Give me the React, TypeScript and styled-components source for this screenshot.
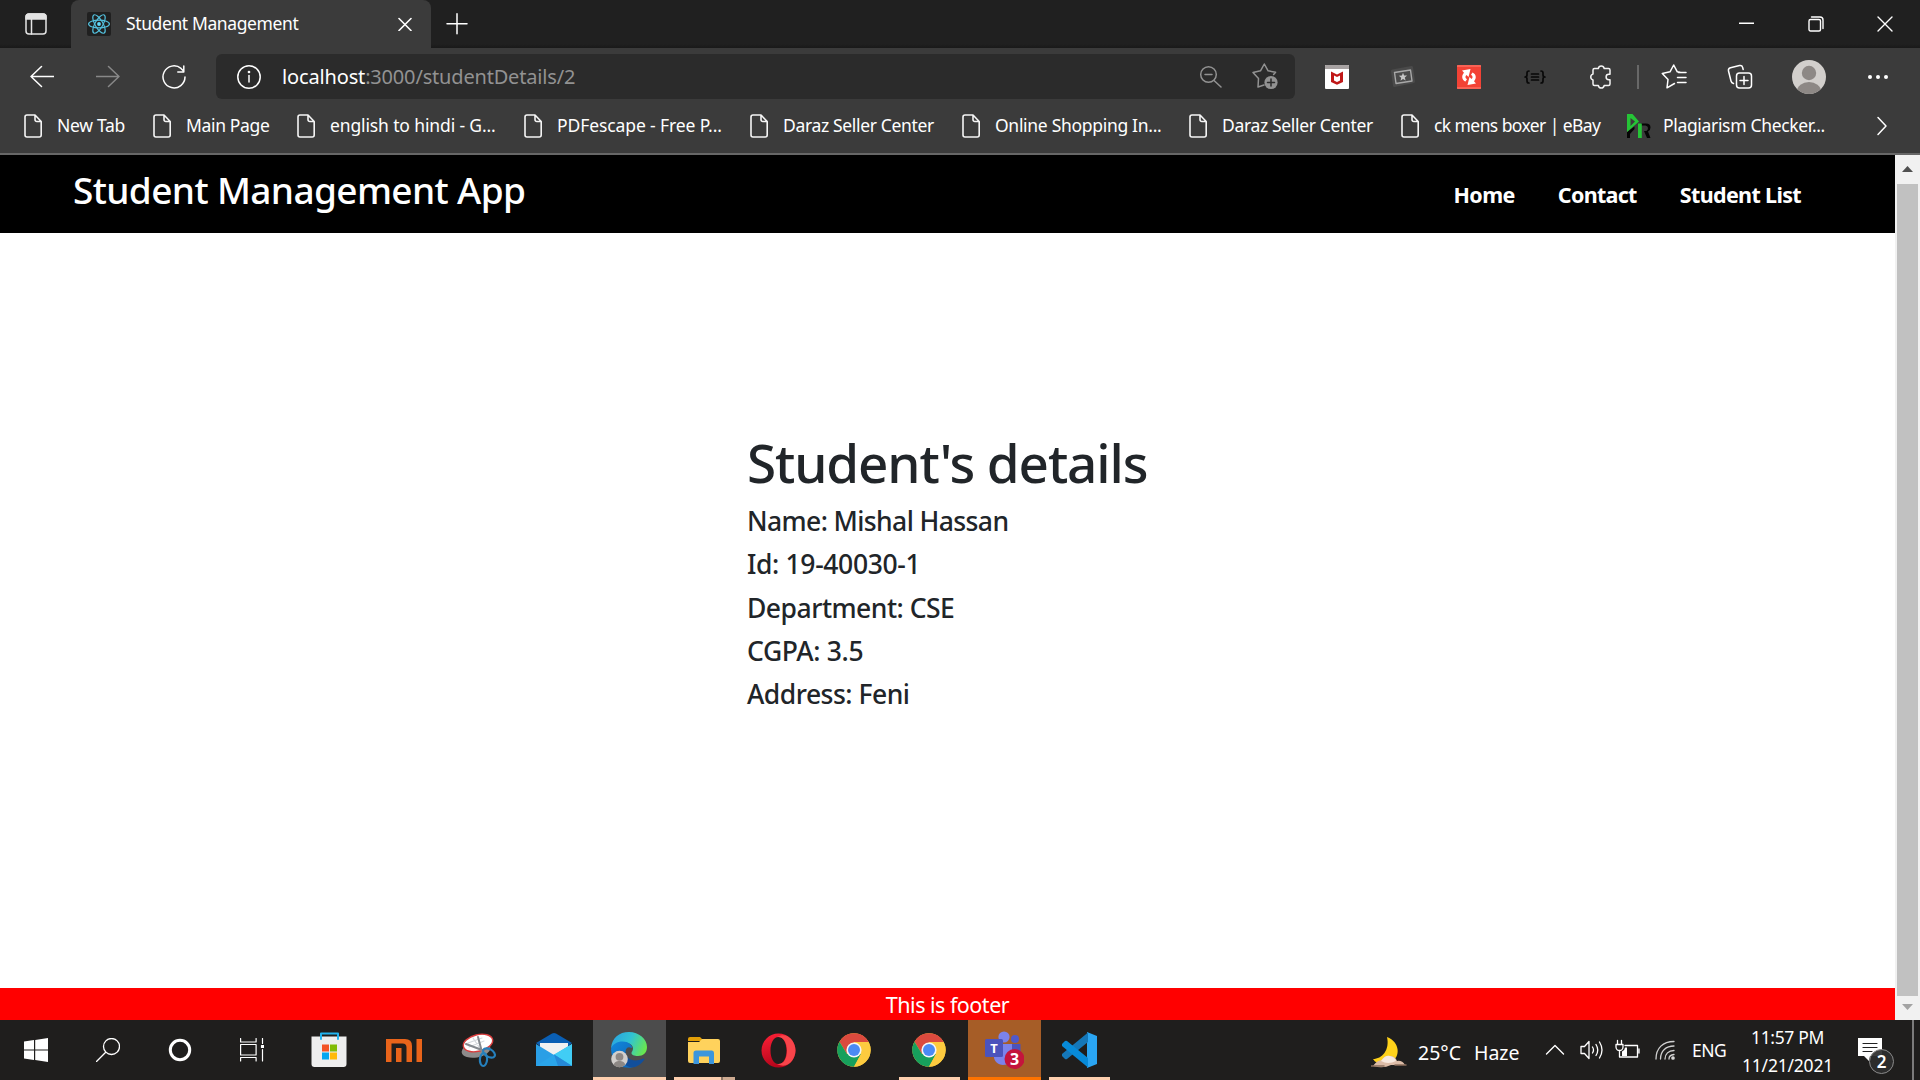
import React from "react";
import styled, { createGlobalStyle } from "styled-components";

const GlobalStyle = createGlobalStyle`
  * { box-sizing: border-box; }
  html, body { margin: 0; padding: 0; overflow: hidden; }
  body { font-family: "Noto Sans", "Open Sans", sans-serif; background: #fff; }
  svg { display: block; flex: none; }
`;

const Screen = styled.div`
  width: 1920px;
  height: 1080px;
  display: flex;
  flex-direction: column;
  overflow: hidden;
`;

/* Text whose tracking is tuned per label */
const Label = styled.span<{ $track?: number }>`
  white-space: nowrap;
  letter-spacing: ${(p) => p.$track ?? 0}px;
`;

/* ---------- Tab strip ---------- */
const TabStrip = styled.div`
  height: 48px;
  display: flex;
  background: linear-gradient(#202020 0 44px, #191919 48px);
`;
const TabActions = styled.div`
  width: 71px;
  display: flex;
  align-items: center;
  justify-content: center;
  padding-left: 1px;
`;
const Tab = styled.div`
  width: 360px;
  display: flex;
  align-items: center;
  padding: 0 19px 0 16px;
  background: #3b3b3b;
  border-radius: 8px 8px 0 0;
  color: #fff;
  font-size: 17.5px;
  line-height: 46px;
`;
const TabTitle = styled(Label)`
  flex: 1;
  height: 48px;
  margin-left: 15px;
`;
const NewTab = styled.div`
  width: 52px;
  display: flex;
  align-items: center;
  justify-content: center;
  padding-bottom: 1px;
`;
const WindowButtons = styled.div`
  margin-left: auto;
  padding-right: 1px;
  display: flex;
`;
const WindowButton = styled.div`
  width: 69px;
  display: flex;
  align-items: center;
  justify-content: center;
  padding-bottom: 1px;
`;

/* ---------- Toolbar ---------- */
const Toolbar = styled.div`
  height: 54px;
  display: flex;
  align-items: center;
  padding: 3px 0 0 9px;
  background: #3b3b3b;
`;
const ToolButton = styled.div<{ $w?: number }>`
  width: ${(p) => p.$w ?? 66}px;
  height: 45px;
  flex: none;
  display: flex;
  align-items: center;
  justify-content: center;
`;
const AddressBar = styled.div`
  width: 1079px;
  height: 45px;
  margin: 0 9px;
  padding: 0 17px 0 20px;
  display: flex;
  align-items: center;
  border-radius: 6px;
  background: #2b2b2b;
  font-size: 20px;
`;
const Url = styled.div`
  flex: 1;
  display: flex;
  margin-left: 20px;
  line-height: 45px;
`;
const UrlHost = styled(Label)`
  color: #fff;
`;
const UrlPath = styled(Label)`
  color: #929292;
`;
const AddressIcons = styled.div`
  display: flex;
  align-items: center;
  gap: 29px;
`;
const Divider = styled.div`
  width: 2px;
  height: 24px;
  margin: 0 2px 0 3px;
  background: #686868;
`;

/* ---------- Bookmarks ---------- */
const BookmarkBar = styled.div`
  height: 53px;
  display: flex;
  padding-left: 21px;
  border-bottom: 2px solid #676767;
  background: #3b3b3b;
`;
const Bookmark = styled.div<{ $w: number }>`
  width: ${(p) => p.$w}px;
  height: 48px;
  flex: none;
  display: flex;
  align-items: center;
  gap: 12px;
  color: #fff;
  font-size: 17.5px;
  line-height: 46px;
`;
const BookmarkText = styled(Label)`
  height: 48px;
`;
const BookmarkOverflow = styled.div`
  margin-left: auto;
  height: 48px;
  padding-right: 32px;
  display: flex;
  align-items: center;
`;

/* ---------- Web page ---------- */
const Viewport = styled.div`
  height: 865px;
  display: flex;
`;
const Page = styled.div`
  width: 1895px;
  display: flex;
  flex-direction: column;
  background: #fff;
`;
const Navbar = styled.header`
  height: 78px;
  display: flex;
  justify-content: space-between;
  padding: 0 94px 0 73px;
  background: #000;
  color: #fff;
`;
const Brand = styled(Label)`
  font-size: 37px;
  font-weight: 540;
  line-height: 70px;
`;
const NavLinks = styled.nav`
  display: flex;
  gap: 43px;
  font-size: 21.5px;
  font-weight: 700;
  line-height: 79px;
`;
const Main = styled.main`
  flex: 1;
  display: flex;
  flex-direction: column;
  padding: 194px 0 0 747px;
  color: #212529;
`;
const Heading = styled.h1`
  margin: 0 0 1px;
  font-size: 53px;
  font-weight: 500;
  line-height: 72px;
  letter-spacing: -1.12px;
`;
const Detail = styled.p<{ $track: number }>`
  margin: 0;
  font-size: 26.5px;
  font-weight: 500;
  line-height: 43.25px;
  letter-spacing: ${(p) => p.$track}px;
`;
const Footer = styled.footer`
  height: 32px;
  background: #f00;
  color: #fff;
  text-align: center;
  font-size: 21.5px;
  line-height: 33px;
`;
const ScrollBar = styled.div`
  width: 25px;
  display: flex;
  flex-direction: column;
  align-items: center;
  background: #f1f1f1;
`;
const ScrollArrow = styled.div<{ $h: number }>`
  height: ${(p) => p.$h}px;
  padding-bottom: 2px;
  display: flex;
  align-items: center;
`;
const Thumb = styled.div`
  width: 21px;
  height: 812px;
  background: #c1c1c1;
`;

/* ---------- Taskbar ---------- */
const Taskbar = styled.div`
  height: 60px;
  display: flex;
  background: #1f1e1d;
  color: #fff;
`;
const SystemButton = styled.div`
  width: 72px;
  display: flex;
  align-items: center;
  justify-content: center;
`;
const Apps = styled.div`
  display: flex;
  gap: 2px;
  margin-left: 5px;
`;
const AppTile = styled.div<{ $bg?: string }>`
  width: 73px;
  display: flex;
  flex-direction: column;
  align-items: center;
  background: ${(p) => p.$bg ?? "transparent"};
`;
const AppIcon = styled.div`
  height: 57px;
  padding: 3px 2px 0 0;
  display: flex;
  align-items: center;
`;
const Underline = styled.div<{ $bg: string; $w: number }>`
  width: ${(p) => p.$w}px;
  height: 3px;
  background: ${(p) => p.$bg};
`;
const Tray = styled.div`
  margin-left: auto;
  display: flex;
  align-items: center;
`;
const Weather = styled.div`
  width: 174px;
  display: flex;
  align-items: center;
  gap: 11px;
  font-size: 19.5px;
  line-height: 26px;
  padding-top: 5px;
`;
const WeatherText = styled.div`
  display: flex;
  gap: 13px;
`;
const TrayIcon = styled.div<{ $w: number }>`
  width: ${(p) => p.$w}px;
  display: flex;
  align-items: center;
`;
const Language = styled.div`
  width: 50px;
  font-size: 17.5px;
`;
const Clock = styled.div`
  width: 91px;
  display: flex;
  flex-direction: column;
  align-items: center;
  padding-top: 1px;
  font-size: 17.5px;
  line-height: 28px;
`;
const Notifications = styled.div`
  position: relative;
  width: 41px;
  height: 60px;
  margin-left: 25px;
  padding-top: 18px;
`;
const Badge = styled.div`
  position: absolute;
  left: 11px;
  top: 29px;
  width: 25px;
  height: 25px;
  border: 1px solid #8a8a8a;
  border-radius: 50%;
  background: rgba(45, 45, 45, 0.93);
  text-align: center;
  font-size: 17px;
  font-weight: 600;
  line-height: 23px;
`;
const ShowDesktop = styled.div`
  width: 8px;
  height: 60px;
  margin-left: 13px;
  border-left: 2px solid #7b7b7b;
`;

/* ---------- Icons ---------- */
type IconProps = { w: number; h?: number; sw?: number; color?: string; vb?: string; children: React.ReactNode };
const Icon = ({ w, h = w, sw = 1.5, color = "#fff", vb, children }: IconProps) => (
  <svg width={w} height={h} viewBox={vb ?? `0 0 ${w} ${h}`} fill="none" stroke={color} strokeWidth={sw} strokeLinecap="round" strokeLinejoin="round">
    {children}
  </svg>
);

const PageIcon = () => (
  <Icon w={24} color="#f5f5f5" sw={1.6}>
    <path d="M6 1h8l6.2 6.5V21a2 2 0 0 1-2 2H6a2 2 0 0 1-2-2V3a2 2 0 0 1 2-2zM14 1v4.7a1.8 1.8 0 0 0 1.8 1.8h4.4" />
  </Icon>
);

const PlagiarismIcon = () => (
  <Icon w={24} color="none">
    <path d="M0 18L7.500 12.500V15L3 20v4H0z" fill="#050505" />
    <path d="M14 9.500h5q4.500 0 4.500 4 0 3-2.500 4l2.500 6.500h-3.500l-3-7h2.500q1.500-1 1.500-3t-2.500-2.500H14z" fill="#050505" />
    <path d="M0 0h5.500l6.500 7.500L0 18zM3.500 4v8L8 7.500z" fill="#25c436" fillRule="evenodd" />
    <path d="M11 9.500h3.800V24H11z" fill="#25c436" />
  </Icon>
);

const ReactLogo = () => (
  <Icon w={24} color="#53c1de" sw={1.2}>
    <rect width="24" height="24" rx="2" fill="#202020" stroke="none" />
    <circle cx="12" cy="12" r="1.9" fill="#61dafb" stroke="none" />
    <ellipse cx="12" cy="12" rx="10.4" ry="3.9" />
    <ellipse cx="12" cy="12" rx="10.4" ry="3.9" transform="rotate(60 12 12)" />
    <ellipse cx="12" cy="12" rx="10.4" ry="3.9" transform="rotate(120 12 12)" />
  </Icon>
);

const ChromeIcon = () => (
  <Icon w={34} color="none" vb="-17 -17 34 34">
    <circle r="16.7" fill="#fdc93a" />
    <path d="M-14.5-8.35A16.7 16.7 0 0 1 14.5-8.35L14.6-8H0L-7 4z" fill="#db4a3e" />
    <path d="M-14.5-8.35A16.7 16.7 0 0 0 0 16.7L7 4-7 4z" fill="#17a05c" />
    <path d="M0 16.7A16.7 16.7 0 0 0 14.6-8H0L7 4z" fill="#fdcb3f" />
    <circle r="7.6" fill="#f4f6f8" />
    <circle r="6" fill="#4a8af4" />
  </Icon>
);

const EdgeIcon = () => (
  <svg width="36" height="36" viewBox="0 0 36 36">
    <defs>
      <linearGradient id="edgeTop" x1="0" y1="0.3" x2="1" y2="0.6">
        <stop offset="0" stopColor="#2aa4e0" /><stop offset="0.5" stopColor="#31c3d2" /><stop offset="1" stopColor="#6ae84c" />
      </linearGradient>
      <linearGradient id="edgeMid" x1="0" y1="0" x2="1" y2="1">
        <stop offset="0" stopColor="#1287dc" /><stop offset="1" stopColor="#0d62b3" />
      </linearGradient>
    </defs>
    <path d="M0 16C1 6 8 0 18 0s18 7 18 15c0 6-4 9-9 9-4 0-6.500-1-6.500-3 0-1.500 1.500-2 1.500-4.500C22 11 13 7 0 16z" fill="url(#edgeTop)" />
    <path d="M0 17C2 9 15 7 20 13c1.500 2 1 3 .5 3-3-2-6 0-6 4 0 8 6 12 11 14-9 4-19 1-23-7Q0 22 0 17z" fill="url(#edgeMid)" />
    <path d="M14.500 20c0 7 8 11 18 6.500q1.500 0 .5 1.500c-5 7-12 9-17 6-4-3-6-11-1.500-14z" fill="#124f9b" />
    <circle cx="8.500" cy="27" r="8.300" fill="#d2cfcc" />
    <circle cx="8.500" cy="24.800" r="3.900" fill="#8d8885" />
    <path d="M2.700 33c.5-5.500 11-5.500 11.600 0a8.300 8.300 0 0 1-11.600 0z" fill="#8d8885" />
  </svg>
);

const MailIcon = () => (
  <Icon w={36} color="none">
    <path d="M0 11L16 1.500q2-1 4 0L36 11 18 25z" fill="#0a5fb4" />
    <path d="M4 11h28v8L18 25 4 19z" fill="#f1f1f1" />
    <path d="M0 12l18 11L36 12v22H0z" fill="#2a9fe6" />
    <path d="M36 12L18 22.500 36 34z" fill="#41cdf5" />
    <path d="M0 34L18 22.500 36 34z" fill="#2aa5ea" />
    <path d="M18 22.500L36 34H22z" fill="#2589d8" />
  </Icon>
);

const SnipIcon = () => (
  <Icon w={36} color="none">
    <ellipse cx="15" cy="18" rx="14.500" ry="7.500" fill="#8d8b8b" transform="rotate(-10 15 18)" />
    <ellipse cx="17" cy="11" rx="15" ry="8.300" fill="#fff" stroke="#d93d3d" strokeWidth="1.4" transform="rotate(-14 17 11)" />
    <path d="M7 11l14-5M8 15l15-6M12 6l8 12" stroke="#d4d8dc" strokeWidth="1.200" />
    <path d="M5 12l16 6M17 5l4 15" stroke="#84898e" strokeWidth="2" />
    <ellipse cx="28" cy="21" rx="6.500" ry="3.900" stroke="#2580bd" strokeWidth="2.200" transform="rotate(30 28 21)" />
    <ellipse cx="22.500" cy="27.500" rx="3.600" ry="6.500" stroke="#2580bd" strokeWidth="2.200" transform="rotate(4 22.500 27.500)" />
  </Icon>
);

const TeamsIcon = () => (
  <Icon w={40} color="none">
    <circle cx="20" cy="7" r="5.600" fill="#7b83eb" />
    <circle cx="31" cy="9" r="4" fill="#5059c9" />
    <path d="M24 14h12.500v10a6 6 0 0 1-12.500 2z" fill="#4b53bc" />
    <path d="M10 14h18v13c0 5-4 8-9 8s-9-4-9-8z" fill="#7b83eb" />
    <rect x="1" y="9" width="18" height="18" rx="1.500" fill="#4b53bc" />
    <circle cx="30.500" cy="29" r="10" fill="#c4143c" />
    <text x="10" y="23" fill="#fff" fontSize="13" fontWeight="700" textAnchor="middle">T</text>
    <text x="30.500" y="34.800" fill="#fff" fontSize="16" fontWeight="700" textAnchor="middle">3</text>
  </Icon>
);

const VsCodeIcon = () => (
  <Icon w={36} color="none">
    <path d="M26 0l10 4v28l-10 4z" fill="#2aa5f2" />
    <path d="M1 24l3 3q1 .7 2 0L27 10V.5L1 22z" fill="#1577b8" />
    <path d="M1 12l3-3q1-.7 2 0l21 17v9.500L1 14z" fill="#078ad8" />
  </Icon>
);

const bookmarks: { text: string; w: number; track: number; own?: boolean }[] = [
  { text: "New Tab", w: 129, track: -0.29 },
  { text: "Main Page", w: 144, track: -0.35 },
  { text: "english to hindi - G...", w: 227, track: -0.13 },
  { text: "PDFescape - Free P...", w: 226, track: -0.1 },
  { text: "Daraz Seller Center", w: 212, track: -0.34 },
  { text: "Online Shopping In...", w: 227, track: -0.3 },
  { text: "Daraz Seller Center", w: 212, track: -0.34 },
  { text: "ck mens boxer | eBay", w: 229, track: -0.58 },
  { text: "Plagiarism Checker...", w: 210, track: -0.33, own: true },
];

const details: [string, number][] = [
  ["Name: Mishal Hassan", -0.6],
  ["Id: 19-40030-1", -0.35],
  ["Department: CSE", -0.5],
  ["CGPA: 3.5", -0.35],
  ["Address: Feni", -0.5],
];

const PEACH = "#fdcfae";
const apps: { icon: React.ReactNode; bg?: string; line?: string; lineW?: number }[] = [
  {
    icon: (
      <Icon w={36} color="none">
        <path d="M.5 4.500h35V32a3 3 0 0 1-3 3h-29a3 3 0 0 1-3-3z" fill="#eeeeee" />
        <path d="M10 7V1.500h17V7" stroke="#22b3ee" strokeWidth="2" />
        <path d="M11 12.500h7v7h-7z" fill="#f35325" /><path d="M19 12.500h7v7h-7z" fill="#81bc06" />
        <path d="M11 20.500h7v7h-7z" fill="#05a6f0" /><path d="M19 20.500h7v7h-7z" fill="#ffba08" />
      </Icon>
    ),
  },
  {
    icon: (
      <Icon w={36} h={23} color="none">
        <path d="M0 0h19q7 0 7 7v16h-5.500V8.500q0-4-4-4H5.500V23H0zM10 9h5.500v14H10zM30.500 0H36v23h-5.500z" fill="#e9641a" />
      </Icon>
    ),
  },
  { icon: <SnipIcon /> },
  { icon: <MailIcon /> },
  { icon: <EdgeIcon />, bg: "#4c4c4c", line: PEACH, lineW: 73 },
  {
    icon: (
      <Icon w={32} color="none">
        <path d="M0 5q0-2 2-2h10l4 4H0z" fill="#e3a008" />
        <path d="M0 8h11l3-3h16q2 0 2 2v20q0 2-2 2H2q-2 0-2-2z" fill="#ffd25c" />
        <path d="M5.500 30V19q0-2.500 2.500-2.500h16q2 0 2 2.500v11h-5v-7.500H11V30z" fill="#3c96dc" />
      </Icon>
    ),
    line: `linear-gradient(90deg, ${PEACH} 0 47px, #8c7565 47px 49px, #cdaa91 49px)`,
    lineW: 61,
  },
  {
    icon: (
      <svg width="35" height="35" viewBox="0 0 35 35">
        <defs><linearGradient id="opera" x1="0" y1="0" x2="0.3" y2="1"><stop offset="0" stopColor="#ff2137" /><stop offset="1" stopColor="#b5051b" /></linearGradient></defs>
        <path d="M17.500.5a17 17 0 1 0 0 34 17 17 0 0 0 0-34zM17.500 4c5 0 8 6 8 13.500S22.500 31 17.500 31 9.500 25 9.500 17.500 12.500 4 17.500 4z" fill="url(#opera)" fillRule="evenodd" />
        <path d="M16 4c11-6 18.500 5 18.500 13.500S27 37 16 31c6 1 10-5 10-13.500S22 3 16 4z" fill="#f8444a" />
      </svg>
    ),
  },
  { icon: <ChromeIcon /> },
  { icon: <ChromeIcon />, line: PEACH, lineW: 61 },
  { icon: <TeamsIcon />, bg: "#a65d27", line: "#ff7300", lineW: 73 },
  { icon: <VsCodeIcon />, line: PEACH, lineW: 61 },
];

const PUZZLE =
  "M6.500 4.500H10.300a3 3 0 0 1 5.900 0H20.500a1.500 1.500 0 0 1 1.500 1.500v4.300h-1.200a2.700 2.700 0 0 0 0 5.400H22V20a1.500 1.500 0 0 1-1.500 1.500h-4.300a3 3 0 0 1-5.900 0H6.500A1.500 1.500 0 0 1 5 20v-4.100a3 3 0 0 1 0-5.800V6a1.500 1.500 0 0 1 1.500-1.500z";

export default function App() {
  return (
    <Screen>
      <GlobalStyle />
      <TabStrip>
        <TabActions>
          <Icon w={22} color="#e4e4e4" sw={1.5}>
            <rect x="1" y="1" width="20" height="20" rx="3" />
            <path d="M1 6V4a3 3 0 0 1 3-3h14a3 3 0 0 1 3 3v2z" fill="#e4e4e4" />
            <path d="M6.500 6v15" />
          </Icon>
        </TabActions>
        <Tab>
          <ReactLogo />
          <TabTitle $track={-0.39}>Student Management</TabTitle>
          <Icon w={14} sw={1.6}><path d="M1 1.500l12 12M13 1.500l-12 12" /></Icon>
        </Tab>
        <NewTab><Icon w={22} sw={1.5}><path d="M11 0.800v20M1 10.800h20" /></Icon></NewTab>
        <WindowButtons>
          <WindowButton><Icon w={15} sw={1.5}><path d="M0 7.200h15" /></Icon></WindowButton>
          <WindowButton>
            <Icon w={16} sw={1.4}>
              <rect x="1" y="3.500" width="11.500" height="11.500" rx="1.500" />
              <path d="M3.500 1h8.500a3 3 0 0 1 3 3v8.500" />
            </Icon>
          </WindowButton>
          <WindowButton><Icon w={16} sw={1.4}><path d="M1 1l14 14M15 1L1 15" /></Icon></WindowButton>
        </WindowButtons>
      </TabStrip>

      <Toolbar>
        <ToolButton><Icon w={24}><path d="M24 11.500H1M11.500 1.500L1 11.500l10.500 10" /></Icon></ToolButton>
        <ToolButton><Icon w={24} color="#888"><path d="M0 11.500h23M12.500 1.500L23 11.500l-10.500 10" /></Icon></ToolButton>
        <ToolButton><Icon w={24}><path d="M23 12a11 11 0 1 1-4-8.600L21.500 6M21.800 1v6h-6" /></Icon></ToolButton>
        <AddressBar>
          <Icon w={26}><circle cx="13" cy="13" r="11.200" /><path d="M13 11.500v6.500" /><circle cx="13" cy="8" r=".6" fill="#fff" /></Icon>
          <Url>
            <UrlHost $track={-0.15}>localhost</UrlHost>
            <UrlPath $track={-0.18}>:3000/studentDetails/2</UrlPath>
          </Url>
          <AddressIcons>
            <Icon w={24} color="#929292"><circle cx="10.500" cy="9.500" r="7.800" /><path d="M16 15.500l7 6.500M7 9.500h7" /></Icon>
            <Icon w={27} color="#929292">
              <path d="M13 22l-6 2 .5-8.500-5.500-6 7.500-1.700L13.300 1l3.800 6.800 7.500 1.400-2 2.200" />
              <circle cx="20" cy="19.500" r="6.600" fill="#929292" stroke="none" />
              <path d="M20 16v7M16.500 19.500h7" stroke="#2b2b2b" />
            </Icon>
          </AddressIcons>
        </AddressBar>
        <ToolButton>
          <Icon w={24} color="none">
            <rect width="24" height="24" rx="1" fill="#fff" /><path d="M0 1q0-1 1-1h22q1 0 1 1v3H0z" fill="#a7a2a2" />
            <path d="M6 6.500l6 3 6-3V17l-6 2.800L6 17zM9 10.500v5l3 1.400 3-1.400v-5l-3 1.500z" fill="#c01818" fillRule="evenodd" />
          </Icon>
        </ToolButton>
        <ToolButton>
          <Icon w={24} color="#a8a8a8" sw={1.400}>
            <path d="M1.500 6l19-3.500 2 14-19 4z" fill="#4a4a4a" stroke="#4a4a4a" strokeWidth="3" />
            <path d="M3.500 7.500l16-2.500 1.500 11-16 2.500z" />
            <path d="M12 7.800l1.100 2.700 3 .1-2.300 2 .8 2.900-2.600-1.500-2.500 1.700.7-3-2.400-1.900 3.100-.3z" fill="#c5c5c5" stroke="none" />
          </Icon>
        </ToolButton>
        <ToolButton>
          <Icon w={24} color="none">
            <rect width="24" height="24" rx="1" fill="#f34235" />
            <path d="M0 1h24M0 23h24" stroke="#ff8177" strokeWidth="1.200" />
            <path d="M13.500 4L5 5.500l2 2.200C4 11 5 15 8.500 16.500l1.500-2.200c-2-1.300-2-3-.5-4.300l2 2z" fill="#fff" />
            <path d="M10.500 20l8.500-1.500-2-2.200c3-3.300 2-7.300-1.500-8.800L14 9.700c2 1.300 2 3 .5 4.300l-2-2z" fill="#fff" />
          </Icon>
        </ToolButton>
        <ToolButton>
          <Icon w={22} h={16} color="#090909" sw={1.700}>
            <path d="M5 2Q3 2 3 4v2q0 2-2 2 2 0 2 2v2q0 2 2 2M17 2q2 0 2 2v2q0 2 2 2-2 0-2 2v2q0 2-2 2M7.500 5h7M7.500 8h7M7.500 11h7" />
          </Icon>
        </ToolButton>
        <ToolButton><Icon w={26} color="#f4f4f4"><path d={PUZZLE} /></Icon></ToolButton>
        <Divider />
        <ToolButton>
          <Icon w={26}>
            <path d="M13.500 19.500L6 23.800l1-8.300-5.700-6 7.700-1.700L12.700 1l3.600 6.800 2.700.4M17.500 8.500H25M16.500 13.500H25M16.500 18.500H25" />
          </Icon>
        </ToolButton>
        <ToolButton>
          <Icon w={26}>
            <rect x="9.500" y="9" width="15" height="15" rx="3" /><path d="M17 12.500v8M13 16.500h8" />
            <path d="M6.500 19.500Q4.500 19 4 17L1.500 7Q1 4.500 3.500 3.800L12.500 1.500q2.500-.5 3 1.500l.7 2.500" />
          </Icon>
        </ToolButton>
        <ToolButton $w={72}>
          <Icon w={34} color="none">
            <defs><clipPath id="avatar"><circle cx="17" cy="17" r="17" /></clipPath></defs>
            <circle cx="17" cy="17" r="17" fill="#d2cfcc" />
            <circle cx="17" cy="13" r="7.200" fill="#8d8885" />
            <ellipse cx="17" cy="31" rx="12" ry="9" fill="#8d8885" clipPath="url(#avatar)" />
          </Icon>
        </ToolButton>
        <ToolButton>
          <Icon w={20} h={4} color="none"><circle cx="2" cy="2" r="2" fill="#fff" /><circle cx="10" cy="2" r="2" fill="#fff" /><circle cx="18" cy="2" r="2" fill="#fff" /></Icon>
        </ToolButton>
      </Toolbar>

      <BookmarkBar>
        {bookmarks.map((b, i) => (
          <Bookmark key={i} $w={b.w}>
            {b.own ? <PlagiarismIcon /> : <PageIcon />}
            <BookmarkText $track={b.track}>{b.text}</BookmarkText>
          </Bookmark>
        ))}
        <BookmarkOverflow><Icon w={12} h={20}><path d="M2 1.500l8 8.500-8 8.500" /></Icon></BookmarkOverflow>
      </BookmarkBar>

      <Viewport>
        <Page>
          <Navbar>
            <Brand $track={-0.62}>Student Management App</Brand>
            <NavLinks>
              <Label $track={-0.6}>Home</Label>
              <Label $track={-0.7}>Contact</Label>
              <Label $track={-0.65}>Student List</Label>
            </NavLinks>
          </Navbar>
          <Main>
            <Heading>Student's details</Heading>
            {details.map(([text, track]) => <Detail key={text} $track={track}>{text}</Detail>)}
          </Main>
          <Footer><Label $track={-0.5}>This is footer</Label></Footer>
        </Page>
        <ScrollBar>
          <ScrollArrow $h={29}><Icon w={11} h={6} color="none"><path d="M0 6L5.500 0 11 6z" fill="#505050" /></Icon></ScrollArrow>
          <Thumb />
          <ScrollArrow $h={24}><Icon w={11} h={6} color="none"><path d="M0 0l5.500 6L11 0z" fill="#a3a3a3" /></Icon></ScrollArrow>
        </ScrollBar>
      </Viewport>

      <Taskbar>
        <SystemButton>
          <Icon w={24} color="none"><path d="M0 3.500l10-1.400V11.500H0zM11.200 1.900L24 0v11.500H11.200zM0 12.500h10v9.400L0 20.500zM11.200 12.500H24V24l-12.800-1.900z" fill="#fff" /></Icon>
        </SystemButton>
        <SystemButton><Icon w={24} sw={1.300}><circle cx="15.500" cy="8.500" r="8" /><path d="M9.700 14.300L.5 23.500" /></Icon></SystemButton>
        <SystemButton><Icon w={24} sw={3}><circle cx="12" cy="12" r="9.700" /></Icon></SystemButton>
        <SystemButton>
          <Icon w={24} sw={1.200}>
            <path d="M.6.500v3.500h15.500V.5M.6 6.500h15.500v10.500H.6zM.6 23v-3.500h15.500V23M22.500.5v5M22.500 11.500V23" />
            <rect x="21.500" y="7.500" width="2" height="2" fill="#fff" />
          </Icon>
        </SystemButton>
        <Apps>
          {apps.map((a, i) => (
            <AppTile key={i} $bg={a.bg}>
              <AppIcon>{a.icon}</AppIcon>
              {a.line && <Underline $bg={a.line} $w={a.lineW ?? 61} />}
            </AppTile>
          ))}
        </Apps>
        <Tray>
          <Weather>
            <Icon w={36} h={32} color="none">
              <path d="M16 0c13 5 14 20 4 25-7 4-15 2-18-3 9 0 17-9 14-22z" fill="#ffd21a" />
              <path d="M2 29q4-6 9-6 3-5 8-4 5 0 7 5 5-1 8 4H20q-8 4-18 1z" fill="#dcbca7" />
              <path d="M10 24q4-6 9-5 5 1 6 5-8 4-15 0z" fill="#f7e9df" />
              <path d="M0 29h13M24 28h11" stroke="#8b6d5c" strokeWidth="1.500" />
            </Icon>
            <WeatherText><Label>25°C</Label><Label>Haze</Label></WeatherText>
          </Weather>
          <TrayIcon $w={35}><Icon w={20} h={20} sw={1.400}><path d="M1.500 14L10 5.500l8.500 8.500" /></Icon></TrayIcon>
          <TrayIcon $w={35}><Icon w={24} h={22} sw={1.300}><path d="M1 7.500h3.500L9 2.500v17L4.500 14.500H1zM12.500 8q2 3 0 6M16 5.500q3.500 5.500 0 11M19.500 3q5 8 0 16" /></Icon></TrayIcon>
          <TrayIcon $w={40}>
            <Icon w={26} h={22} sw={1.300}>
              <path d="M10 6.500h12.500V18H6.500M24 10v4M2.500 1.500v3M6.500 1.500v3M1 5.500h7v2.500a3.500 3.500 0 0 1-7 0zM4.500 11.500V18h2" />
              <path d="M7 12.500q3-1.500 3-4h2V17H7z" fill="#fff" stroke="none" />
            </Icon>
          </TrayIcon>
          <TrayIcon $w={37}>
            <Icon w={20} h={22} sw={1.300} color="#d0d0d0">
              <path d="M1 20C1 9 8 2.500 19 2.500M5.500 20C5.500 12 11 7 19 7M10 20c0-5 3.500-8.500 9-8.500M14 20q0-4 5-4.500" /><circle cx="18" cy="19" r="1.200" fill="#fff" />
            </Icon>
          </TrayIcon>
          <Language><Label $track={-0.5}>ENG</Label></Language>
          <Clock><Label $track={-0.35}>11:57 PM</Label><Label $track={-0.2}>11/21/2021</Label></Clock>
          <Notifications>
            <Icon w={24} color="none"><path d="M0 0h24v18H12l-1 5-5-5H0z" fill="#fff" /><path d="M5 5.500h14M5 9.500h14M5 13.500h9" stroke="#222" strokeWidth="1.200" /></Icon>
            <Badge>2</Badge>
          </Notifications>
          <ShowDesktop />
        </Tray>
      </Taskbar>
    </Screen>
  );
}
